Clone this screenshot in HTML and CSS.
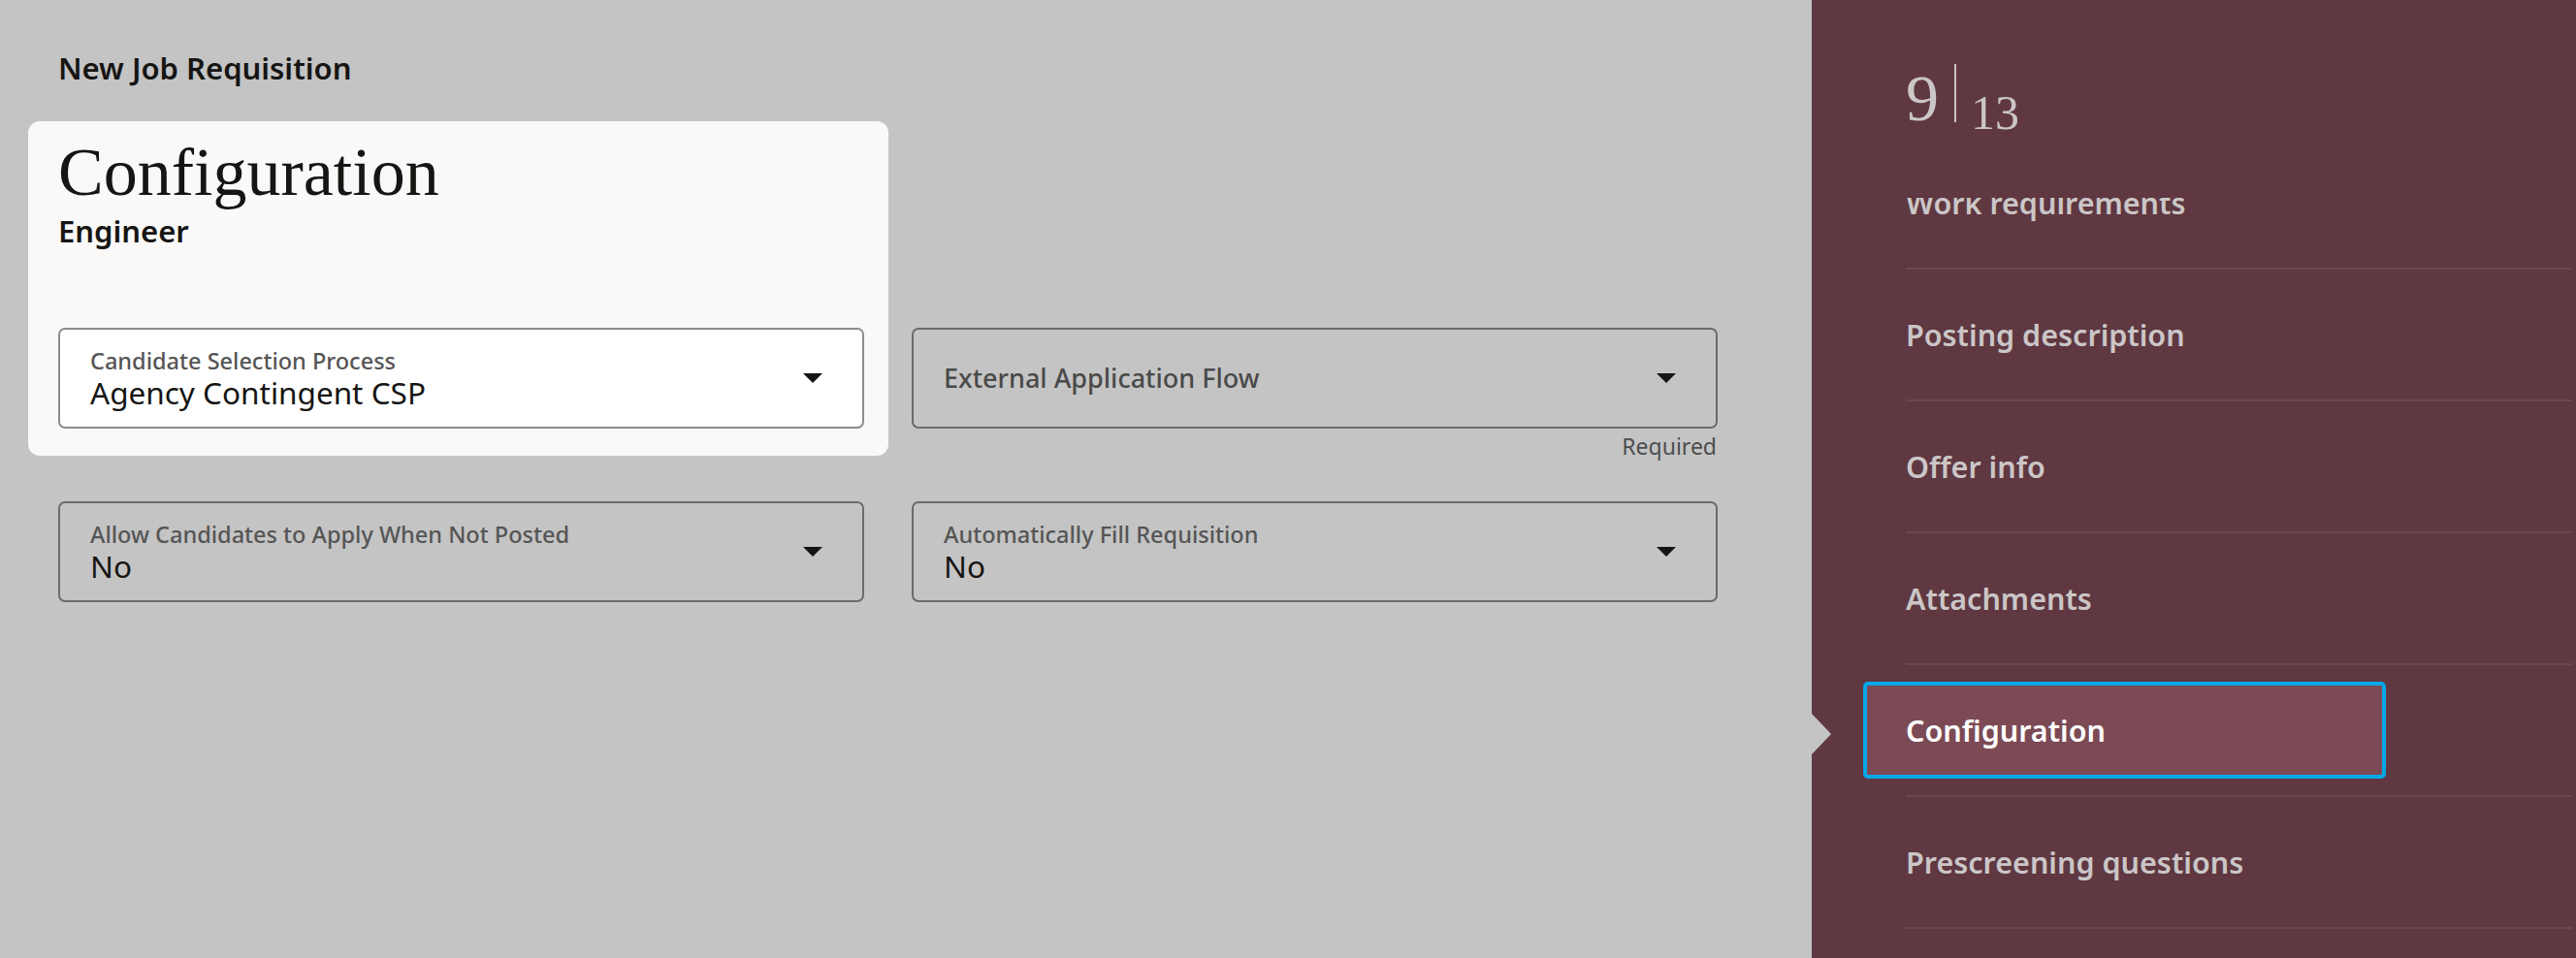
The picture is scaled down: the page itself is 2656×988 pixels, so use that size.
FILE: index.html
```html
<!DOCTYPE html>
<html lang="en">
<head>
<meta charset="utf-8">
<title>New Job Requisition – Configuration</title>
<link rel="stylesheet" href="styles.css">
</head>
<body>
<div class="screen">
  <main class="workspace">
    <h1 class="page-title">New Job Requisition</h1>

    <div class="row-top">
      <section class="card">
        <h2 class="card-title">Configuration</h2>
        <p class="card-subtitle">Engineer</p>
        <div class="select select-filled">
          <div class="select-text">
            <span class="select-label">Candidate Selection Process</span>
            <span class="select-value">Agency Contingent CSP</span>
          </div>
          <svg class="caret" width="20" height="10" viewBox="0 0 20 10" aria-hidden="true"><path d="M0 0h20L10 10z"/></svg>
        </div>
      </section>

      <div class="field-col">
        <div class="select">
          <span class="select-placeholder">External Application Flow</span>
          <svg class="caret" width="20" height="10" viewBox="0 0 20 10" aria-hidden="true"><path d="M0 0h20L10 10z"/></svg>
        </div>
        <p class="field-hint">Required</p>
      </div>
    </div>

    <div class="row-bottom">
      <div class="select">
        <div class="select-text">
          <span class="select-label">Allow Candidates to Apply When Not Posted</span>
          <span class="select-value">No</span>
        </div>
        <svg class="caret" width="20" height="10" viewBox="0 0 20 10" aria-hidden="true"><path d="M0 0h20L10 10z"/></svg>
      </div>
      <div class="select">
        <div class="select-text">
          <span class="select-label">Automatically Fill Requisition</span>
          <span class="select-value">No</span>
        </div>
        <svg class="caret" width="20" height="10" viewBox="0 0 20 10" aria-hidden="true"><path d="M0 0h20L10 10z"/></svg>
      </div>
    </div>
  </main>

  <aside class="guide">
    <div class="step-count">
      <span class="step-current">9</span>
      <span class="step-divider"></span>
      <span class="step-total">13</span>
    </div>
    <nav class="step-viewport">
      <ol class="step-list">
        <li class="step"><span class="step-link">Work requirements</span></li>
        <li class="step"><span class="step-link">Posting description</span></li>
        <li class="step"><span class="step-link">Offer info</span></li>
        <li class="step"><span class="step-link">Attachments</span></li>
        <li class="step is-current"><span class="step-link">Configuration</span></li>
        <li class="step"><span class="step-link">Prescreening questions</span></li>
      </ol>
    </nav>
  </aside>
</div>
</body>
</html>
```

FILE: styles.css
```css
* {
  box-sizing: border-box;
}

html,
body {
  margin: 0;
  padding: 0;
}

body {
  background: #c4c4c4;
  overflow: hidden;
  font-family: "Noto Sans", "Open Sans", sans-serif;
  color: #161513;
}

.screen {
  display: flex;
  width: 2656px;
  height: 988px;
}

/* ---------- left work area ---------- */

.workspace {
  width: 1868px;
  flex: none;
  padding: 50px 0 0 29px;
}

.page-title {
  margin: 0 0 0 31px;
  font-size: 31px;
  line-height: 40px;
  font-weight: 600;
  color: #161513;
}

.row-top {
  display: flex;
  align-items: flex-start;
  margin-top: 35px;
}

.card {
  width: 887px;
  flex: none;
  padding: 17px 25px 28px 31px;
  background: #faf9f8;
  border-radius: 12px;
}

.card-title {
  margin: 0;
  font-family: "Liberation Serif", "DejaVu Serif", serif;
  font-weight: 400;
  font-size: 70px;
  line-height: 72px;
  color: #161513;
}

.card-subtitle {
  margin: 4px 0 0;
  font-size: 31px;
  line-height: 40px;
  font-weight: 600;
}

.card .select {
  margin-top: 80px;
}

.field-col {
  width: 831px;
  flex: none;
  margin: 213px 0 0 24px;
}

.field-hint {
  margin: 4px 0 0;
  padding-right: 1px;
  text-align: right;
  font-size: 23px;
  line-height: 28px;
  color: #4d4d4d;
}

.row-bottom {
  display: grid;
  grid-template-columns: 831px 831px;
  column-gap: 49px;
  margin: 43px 0 0 31px;
}

/* ---------- select fields ---------- */

.select {
  display: flex;
  align-items: center;
  justify-content: space-between;
  width: 831px;
  height: 104px;
  padding: 0 41px 0 31px;
  border: 2px solid rgba(0, 0, 0, 0.45);
  border-radius: 7px;
  background: transparent;
}

.select-filled {
  background: #ffffff;
}

.select-text {
  display: flex;
  flex-direction: column;
}

.select-label {
  font-size: 23.5px;
  line-height: 29px;
  font-weight: 500;
  color: #555555;
}

.select-value {
  font-size: 31.5px;
  line-height: 36px;
  color: #161513;
}

.select-placeholder {
  font-size: 27px;
  line-height: 36px;
  font-weight: 500;
  color: #4a4a4a;
}

.caret {
  flex: none;
  fill: #161513;
}

/* ---------- guide panel ---------- */

.guide {
  width: 788px;
  flex: none;
  height: 988px;
  display: flex;
  flex-direction: column;
  padding-top: 66px;
  background: #5f3841;
}

.step-count {
  display: flex;
  align-items: flex-start;
  height: 78px;
  flex: none;
  margin-left: 97px;
  color: #cbc6c7;
  font-family: "Liberation Serif", "DejaVu Serif", serif;
}

.step-current {
  margin-top: 1px;
  font-size: 68px;
  line-height: 68px;
}

.step-divider {
  width: 2px;
  height: 60px;
  margin-left: 16px;
  background: #cbc6c7;
}

.step-total {
  margin: 25px 0 0 15px;
  font-size: 50px;
  line-height: 50px;
}

.step-viewport {
  flex: 1;
  margin: 60px 4px 0 0;
  overflow: hidden;
}

.step-list {
  list-style: none;
  margin: -62px 0 0 97px;
  padding: 0;
}

.step {
  position: relative;
  padding: 17px 0;
  border-bottom: 2px solid rgba(255, 255, 255, 0.08);
}

.step-link {
  display: flex;
  align-items: center;
  width: 539px;
  height: 100px;
  margin-left: -44px;
  padding-left: 40px;
  border: 4px solid transparent;
  border-radius: 5px;
  font-size: 30.5px;
  font-weight: 600;
  color: #cbc6c7;
}

.step.is-current .step-link {
  background: #7b4a55;
  border-color: #00a8e8;
  color: #ffffff;
}

/* pointer notch on the panel edge beside the current step */
.step.is-current::before {
  content: "";
  position: absolute;
  left: -97px;
  top: 50px;
  border-left: 20px solid #c4c4c4;
  border-top: 21px solid transparent;
  border-bottom: 21px solid transparent;
}
```
